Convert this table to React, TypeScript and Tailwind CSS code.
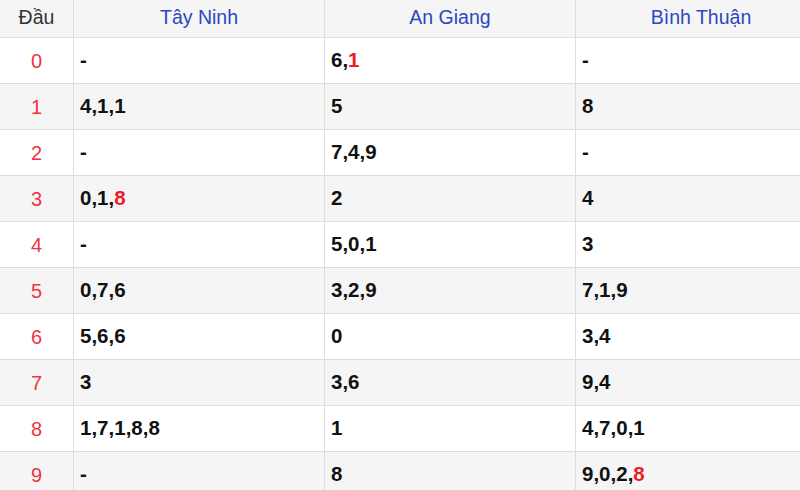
// Bảng thống kê đầu lô theo đài
const PROVINCES = ["Tây Ninh", "An Giang", "Bình Thuận"];

// each cell: list of digits, "*" suffix marks the highlighted (red) one
const ROWS: string[][][] = [
  [["-"], ["6", "1*"], ["-"]],
  [["4", "1", "1"], ["5"], ["8"]],
  [["-"], ["7", "4", "9"], ["-"]],
  [["0", "1", "8*"], ["2"], ["4"]],
  [["-"], ["5", "0", "1"], ["3"]],
  [["0", "7", "6"], ["3", "2", "9"], ["7", "1", "9"]],
  [["5", "6", "6"], ["0"], ["3", "4"]],
  [["3"], ["3", "6"], ["9", "4"]],
  [["1", "7", "1", "8", "8"], ["1"], ["4", "7", "0", "1"]],
  [["-"], ["8"], ["9", "0", "2", "8*"]],
];

function Cell({ items }: { items: string[] }) {
  return (
    <>
      {items.map((it, i) => {
        const hot = it.endsWith("*");
        const v = hot ? it.slice(0, -1) : it;
        return (
          <span key={i}>
            <span className={hot ? "text-[#ee1c25]" : ""}>{v}</span>
            {i < items.length - 1 && ","}
          </span>
        );
      })}
    </>
  );
}

export default function App() {
  return (
    <div className="w-[800px] h-[490px] overflow-hidden bg-white font-['Liberation_Sans',Arial,sans-serif]">
      <div className="grid w-[827px] grid-cols-[74px_251px_251px_251px]">
        {/* ─── HEADER ─── */}
        <div className="h-[38px] pb-[2px] flex items-center justify-center bg-[#f5f5f5] border-r border-b border-[#dedede] text-[19.5px] text-[#333]">
          Đầu
        </div>
        {PROVINCES.map((p) => (
          <div
            key={p}
            className="h-[38px] pb-[2px] flex items-center justify-center bg-[#f5f5f5] border-r border-b border-[#dedede] text-[19.5px] text-[#2a48c0]"
          >
            {p}
          </div>
        ))}

        {/* ─── ROWS ─── */}
        {ROWS.map((row, r) => {
          const bg = r % 2 === 1 ? "bg-[#f5f5f5]" : "bg-white";
          return (
            <div key={r} className="contents">
              <div
                className={`h-[46px] flex items-center justify-center border-r border-b border-[#dedede] text-[20px] text-[#ef3340] ${bg}`}
              >
                {r}
              </div>
              {row.map((cell, c) => (
                <div
                  key={c}
                  className={`h-[46px] flex items-center pl-[6px] border-r border-b border-[#dedede] text-[20.5px] font-bold text-[#111] ${bg}`}
                >
                  <Cell items={cell} />
                </div>
              ))}
            </div>
          );
        })}
      </div>
    </div>
  );
}
